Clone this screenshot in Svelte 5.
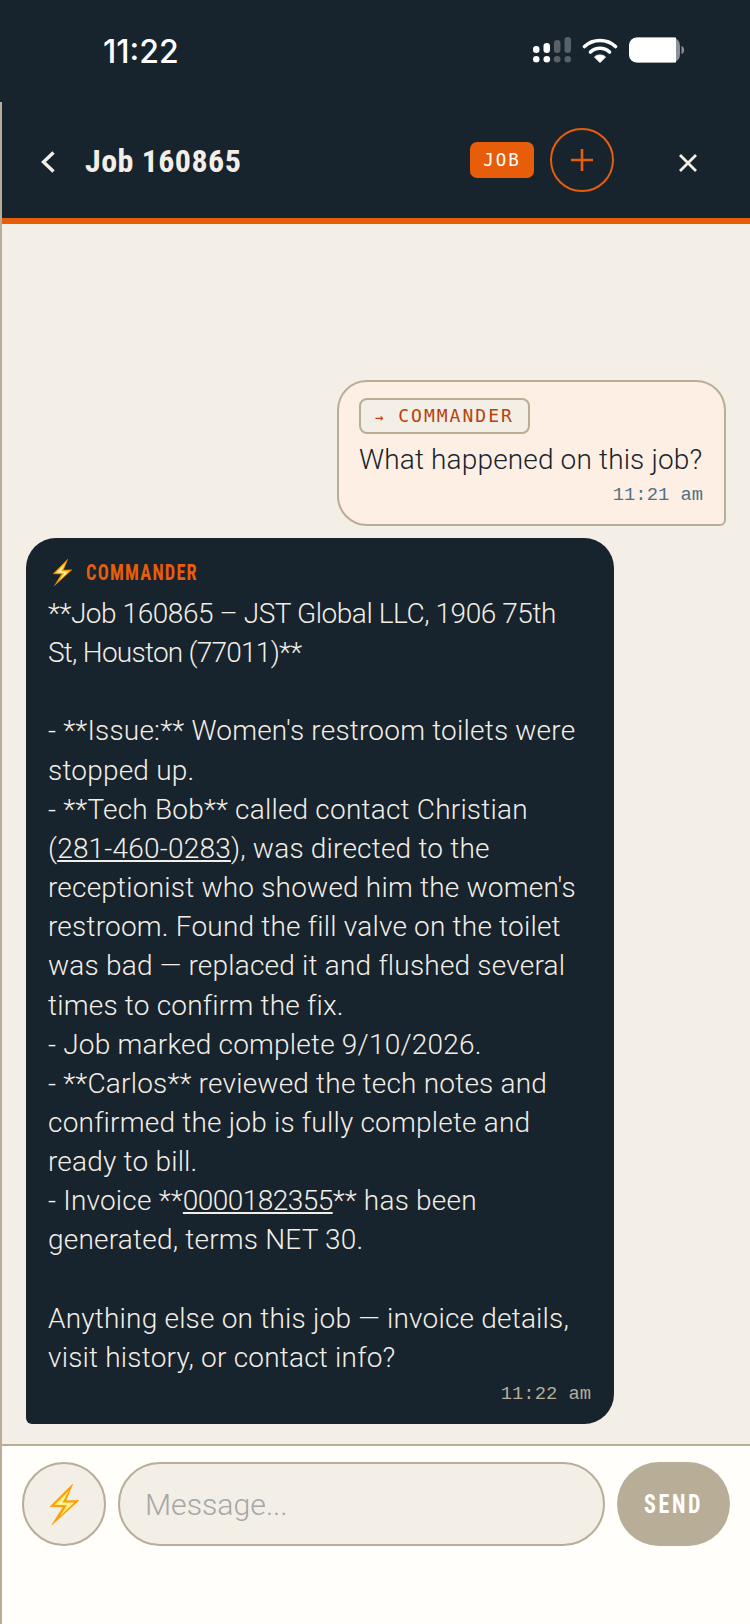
<script>
  const lines = [
    { parts: ['**Job 160865 – JST Global LLC, 1906 75th'], spacing: '-0.44px' },
    { parts: ['St, Houston (77011)**'], spacing: '-0.75px' },
    { parts: [] },
    { parts: ["- **Issue:** Women's restroom toilets were"] },
    { parts: ['stopped up.'] },
    { parts: ['- **Tech Bob** called contact Christian'] },
    { parts: ['(', { link: '281-460-0283' }, '), was directed to the'] },
    { parts: ["receptionist who showed him the women's"] },
    { parts: ['restroom. Found the fill valve on the toilet'] },
    { parts: ['was bad — replaced it and flushed several'] },
    { parts: ['times to confirm the fix.'] },
    { parts: ['- Job marked complete 9/10/2026.'] },
    { parts: ['- **Carlos** reviewed the tech notes and'] },
    { parts: ['confirmed the job is fully complete and'] },
    { parts: ['ready to bill.'] },
    { parts: ['- Invoice **', { link: '0000182355', spacing: '-0.55px' }, '** has been'] },
    { parts: ['generated, terms NET 30.'] },
    { parts: [] },
    { parts: ['Anything else on this job — invoice details,'] },
    { parts: ['visit history, or contact info?'] }
  ];
</script>

{#snippet bolt(w, h)}
  <svg class="bolt" width={w} height={h} viewBox="0 0 84 120" aria-hidden="true">
    <path d="M66 0 L0 66 L38 67 L5 120 L84 48 L46 49 Z" fill="#ff9f00" stroke="#f59300" stroke-width="1.5" stroke-linejoin="miter"/>
    <path d="M56 18 L13 61 L49 62 L28 95 L71 54 L36 54 Z" fill="#fff07a"/>
    <path d="M46 36 L27 56 L56 58 L44 74 L58 60 L31 58 Z" fill="#fffde8"/>
  </svg>
{/snippet}

<div class="app">
  <div class="status">
    <span class="clock">11:22</span>
    <div class="sys">
      <svg width="38" height="26" viewBox="0 0 38 26" aria-hidden="true">
        <g fill="#fff">
          <rect x="0" y="9" width="6.5" height="7" rx="3.2"/>
          <rect x="10.5" y="6" width="6.5" height="10" rx="3.2"/>
          <circle cx="3.2" cy="22.2" r="3.3"/>
          <circle cx="13.8" cy="22.2" r="3.3"/>
        </g>
        <g fill="#fff" opacity="0.28">
          <rect x="21" y="3" width="6.5" height="13" rx="3.2"/>
          <rect x="31.5" y="0" width="6.5" height="16" rx="3.2"/>
          <circle cx="24.2" cy="22.2" r="3.3"/>
          <circle cx="34.8" cy="22.2" r="3.3"/>
        </g>
      </svg>
      <svg width="36" height="26" viewBox="0 0 36 26" aria-hidden="true">
        <g fill="none" stroke="#fff" stroke-width="3.6" stroke-linecap="round">
          <path d="M2.5 9.5 C11 1.5 25 1.5 33.5 9.5"/>
          <path d="M8.5 15 C14 10 22 10 27.5 15"/>
        </g>
        <path d="M18 25.5 L12.5 20 C15.5 17.3 20.5 17.3 23.5 20 Z" fill="#fff" stroke="#fff" stroke-linejoin="round"/>
      </svg>
      <svg width="56" height="26" viewBox="0 0 56 26" aria-hidden="true">
        <rect x="0" y="0.5" width="51" height="25" rx="8" fill="#8a9095"/>
        <path d="M8 0.5 H47 V25.5 H8 A8 8 0 0 1 0 17.5 V8.5 A8 8 0 0 1 8 0.5 Z" fill="#fff"/>
        <path d="M52.5 9 C56 10 56 16 52.5 17 Z" fill="#8a9095"/>
      </svg>
    </div>
  </div>

  <div class="frame">
    <header class="head">
      <svg class="back" width="16" height="22" viewBox="0 0 16 22" aria-hidden="true">
        <path d="M13.5 1.5 L3.5 11 L13.5 20.5" fill="none" stroke="#f3eee6" stroke-width="3.4"/>
      </svg>
      <div class="title"><h1>Job 160865</h1></div>
      <span class="badge">JOB</span>
      <button class="plus" aria-label="New">
        <svg width="24" height="24" viewBox="0 0 24 24" aria-hidden="true">
          <path d="M12 1 V23 M1 12 H23" stroke="#e85d0a" stroke-width="2.6" fill="none"/>
        </svg>
      </button>
      <button class="close" aria-label="Close">
        <svg width="20" height="20" viewBox="0 0 20 20" aria-hidden="true">
          <path d="M2 2 L18 18 M18 2 L2 18" stroke="#f3eee6" stroke-width="2.8" fill="none"/>
        </svg>
      </button>
    </header>

    <main class="chat">
      <div class="bubble user">
        <span class="tag"><span class="arrow">→</span> COMMANDER</span>
        <p class="utext">What happened on this job?</p>
        <time class="stamp ustamp">11:21 am</time>
      </div>

      <div class="bubble bot">
        <div class="who">{@render bolt(19, 27)}<span class="narrow">COMMANDER</span></div>
        <div class="btext">
          {#each lines as line}
            <div class="line" style:letter-spacing={line.spacing}>{#each line.parts as part}{#if typeof part === 'string'}{part}{:else}<u style:letter-spacing={part.spacing}>{part.link}</u>{/if}{/each}</div>
          {/each}
        </div>
        <time class="stamp bstamp">11:22 am</time>
      </div>
    </main>

    <footer class="composer">
      <button class="zap" aria-label="Commander">{@render bolt(29, 41)}</button>
      <div class="input">Message...</div>
      <button class="send"><span class="sendlabel">SEND</span></button>
    </footer>
  </div>
</div>

<style>
  :global(body) { margin: 0; background: #17232d; }
  .app {
    width: 750px;
    height: 1624px;
    display: flex;
    flex-direction: column;
    overflow: hidden;
    font-family: Roboto, "Liberation Sans", sans-serif;
    background: #17232d;
  }
  button { padding: 0; margin: 0; font: inherit; cursor: pointer; }

  .status {
    height: 102px;
    flex: none;
    display: flex;
    align-items: flex-start;
    justify-content: space-between;
    box-sizing: border-box;
    padding: 32px 65px 0 103px;
  }
  .clock {
    font-family: Inter, Roboto, sans-serif;
    font-weight: 500;
    font-size: 32px;
    line-height: 36px;
    color: #fff;
    padding-top: 2px;
  }
  .sys { display: flex; align-items: center; gap: 11px; padding-top: 5px; }

  .frame {
    flex: 1;
    min-height: 0;
    display: flex;
    flex-direction: column;
    border-left: 2px solid #b8ae98;
    background: #f3eee6;
  }

  .head {
    flex: none;
    height: 116px;
    box-sizing: content-box;
    border-bottom: 6px solid #e85d0a;
    background: #17232d;
    display: flex;
    align-items: center;
  }
  .back { margin-left: 38px; margin-top: 4px; flex: none; }
  .title { flex: 1; margin-left: 29px; padding-top: 2px; }
  h1 {
    margin: 0;
    font-family: Roboto, sans-serif;
    font-stretch: 75%;
    font-weight: 700;
    font-size: 32px;
    letter-spacing: 0.45px;
    color: #f3eee6;
    white-space: nowrap;
  }
  .badge {
    width: 64px;
    height: 36px;
    border-radius: 7px;
    background: #e85d0a;
    color: #fff;
    font-family: "DejaVu Sans Mono", "Liberation Mono", monospace;
    font-size: 17.5px;
    letter-spacing: 2px;
    display: flex;
    align-items: center;
    justify-content: center;
  }
  .plus {
    width: 64px;
    height: 64px;
    margin-left: 16px;
    border-radius: 50%;
    border: 2px solid #e85d0a;
    background: transparent;
    display: flex;
    align-items: center;
    justify-content: center;
  }
  .close {
    width: 20px;
    height: 20px;
    margin: 6px 52px 0 64px;
    border: 0;
    background: transparent;
    display: flex;
  }

  .chat {
    flex: 1;
    min-height: 0;
    box-sizing: border-box;
    padding: 156px 24px 0 24px;
    display: flex;
    flex-direction: column;
    align-items: flex-start;
    gap: 12px;
  }
  .bubble { box-sizing: border-box; display: flex; flex-direction: column; }
  .user {
    align-self: flex-end;
    width: 389px;
    height: 146px;
    padding: 16px 20px 0 20px;
    background: #fdefe3;
    border: 2px solid #b8ae98;
    border-radius: 30px 30px 6px 30px;
  }
  .tag {
    align-self: flex-start;
    box-sizing: border-box;
    height: 36px;
    padding: 0 14px;
    border: 2px solid #b8ae98;
    border-radius: 8px;
    background: #f3eee6;
    color: #b8410a;
    font-family: "DejaVu Sans Mono", "Liberation Mono", monospace;
    font-size: 18px;
    letter-spacing: 2px;
    line-height: 32px;
    white-space: nowrap;
  }
  .arrow { font-size: 14px; }
  .utext {
    margin: 6px 0 0;
    font-size: 28px;
    line-height: 39px;
    font-weight: 350;
    letter-spacing: 0.15px;
    color: #17232d;
    white-space: nowrap;
  }
  .stamp {
    align-self: flex-end;
    font-family: "Liberation Mono", monospace;
    font-size: 18.8px;
    line-height: 24px;
    margin-right: 1px;
  }
  .ustamp { color: #4f7088; margin-top: 4px; }
  .bot {
    width: 588px;
    height: 886px;
    padding: 20px 22px 0 22px;
    background: #17232d;
    border-radius: 30px 30px 30px 6px;
    color: #f3eee6;
  }
  .who {
    display: flex;
    align-items: center;
    gap: 14px;
    height: 28px;
    padding-left: 5px;
    font-family: Roboto, sans-serif;
    font-stretch: 75%;
    font-weight: 700;
    font-size: 22px;
    letter-spacing: 1.5px;
    color: #e85d0a;
  }
  .narrow { display: inline-block; transform: scaleX(0.83); transform-origin: left center; }
  .bolt { flex: none; }
  .btext { margin-top: 8px; font-size: 28px; line-height: 39.15px; font-weight: 350; letter-spacing: 0.2px; }
  .line { min-height: 39.15px; white-space: nowrap; }
  .bstamp { color: #b8ae98; margin-top: 5px; }

  .composer {
    flex: none;
    height: 180px;
    box-sizing: border-box;
    border-top: 2px solid #b8ae98;
    background: #fffefa;
    display: flex;
    align-items: flex-start;
    padding: 16px 20px 0 20px;
    gap: 12px;
  }
  .zap {
    width: 84px;
    height: 84px;
    flex: none;
    border-radius: 50%;
    border: 2px solid #b8ae98;
    background: #f3eee6;
    display: flex;
    align-items: center;
    justify-content: center;
  }
  .input {
    flex: 1;
    height: 84px;
    box-sizing: border-box;
    border: 2px solid #b8ae98;
    border-radius: 42px;
    background: #f3eee6;
    padding: 0 25px;
    font-size: 30.2px;
    font-weight: 350;
    color: #a5a7a7;
    display: flex;
    align-items: center;
  }
  .send {
    width: 113px;
    height: 84px;
    flex: none;
    border: 0;
    border-radius: 42px;
    background: #b8ae98;
    color: #fff;
    font-family: Roboto, sans-serif;
    font-stretch: 75%;
    font-weight: 700;
    font-size: 25px;
    letter-spacing: 3px;
  }
  .sendlabel { display: inline-block; transform: scaleX(0.88); }
</style>
